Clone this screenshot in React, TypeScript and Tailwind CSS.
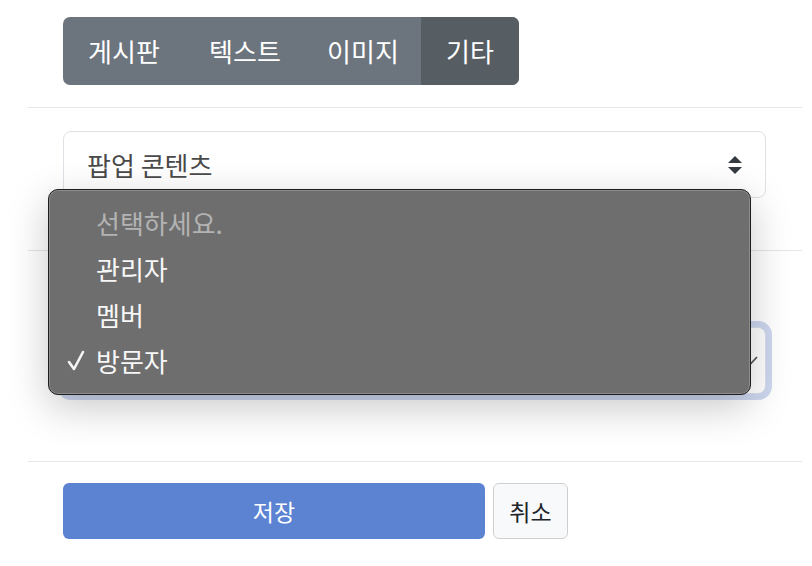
import React from "react";

const tabs = [
  { label: "게시판", w: "w-[122px]" },
  { label: "텍스트", w: "w-[120px]" },
  { label: "이미지", w: "w-[116px]" },
  { label: "기타", w: "w-[98px] bg-[#565e64]" },
];
const options = [
  { label: "선택하세요.", muted: true },
  { label: "관리자" },
  { label: "멤버" },
  { label: "방문자", checked: true },
];

export default function App() {
  return (
    <div
      className="relative h-[566px] w-[812px] overflow-hidden bg-white text-[#212529]"
      style={{ fontFamily: '"Noto Sans CJK KR", "Noto Sans", sans-serif' }}
    >
      <div className="ml-[28px] w-[774px]">
        {/* tab group */}
        <div className="border-b border-[#e6e6e6] pb-[22px] pl-[35px] pt-[17px]">
          <div className="inline-flex h-[68px] overflow-hidden rounded-[7px] bg-[#6c757d]">
            {tabs.map((t) => (
              <button key={t.label} className={`${t.w} text-[26px] leading-[68px] text-white`}>
                {t.label}
              </button>
            ))}
          </div>
        </div>

        {/* popup content select */}
        <div className="border-b border-[#e6e6e6] pb-[52px] pl-[35px] pr-[36px] pt-[23px]">
          <div className="flex h-[67px] items-center justify-between rounded-[8px] border border-[#dee2e6] bg-white pl-[23px] pr-[23px]">
            <span className="text-[26px] text-[#4a4a4a]">팝업 콘텐츠</span>
            <svg width="14" height="18" viewBox="0 0 14 18">
              <path d="M7 0 L14 7 L0 7 Z" fill="#343a40" />
              <path d="M0 11 L14 11 L7 18 Z" fill="#343a40" />
            </svg>
          </div>
        </div>

        {/* role select (focused) */}
        <div className="border-b border-[#e6e6e6] pb-[67px] pl-[35px] pr-[36px] pt-[76px]">
          <div className="relative flex h-[67px] items-center rounded-[8px] border border-[#d9dfee] bg-white pl-[23px] shadow-[0_0_0_6px_#cdd7ef]">
            <span className="text-[26px]">방문자</span>
            <svg className="absolute right-[7px] top-[28px]" width="18" height="11" viewBox="0 0 18 11">
              <path d="M1 1 L9 9.5 L17 1" fill="none" stroke="#555" strokeWidth="1.8" />
            </svg>
          </div>
        </div>

        {/* actions */}
        <div className="flex gap-[8px] pl-[35px] pt-[21px]">
          <button className="h-[56px] w-[422px] rounded-[6px] bg-[#5c82d2] text-[23px] text-white">
            저장
          </button>
          <button className="h-[56px] w-[75px] rounded-[6px] border border-[#cfcfcf] bg-[#f8f9fa] text-[23px] text-[#212529]">
            취소
          </button>
        </div>
      </div>

      {/* native select menu */}
      <div className="absolute left-[48px] top-[189px] h-[206px] w-[703px] rounded-[10px] border border-[#1e1e1e] bg-[#6e6e6e] pt-[9px] shadow-[inset_0_0_0_1px_rgba(255,255,255,0.22),0_12px_40px_rgba(0,0,0,0.22)]">
        {options.map((o) => (
          <div key={o.label} className="relative flex h-[46px] items-center pl-[47px]">
            {o.checked && (
              <svg className="absolute left-[18px] top-[13px]" width="18" height="21" viewBox="0 0 18 21">
                <path d="M2 12 L7 19 L16 2" fill="none" stroke="#f4f4f4" strokeWidth="2.6" strokeLinecap="round" strokeLinejoin="round" />
              </svg>
            )}
            <span className={o.muted ? "text-[26px] text-[#b3b3b3]" : "text-[26px] text-[#f7f7f7]"}>
              {o.label}
            </span>
          </div>
        ))}
      </div>
    </div>
  );
}
